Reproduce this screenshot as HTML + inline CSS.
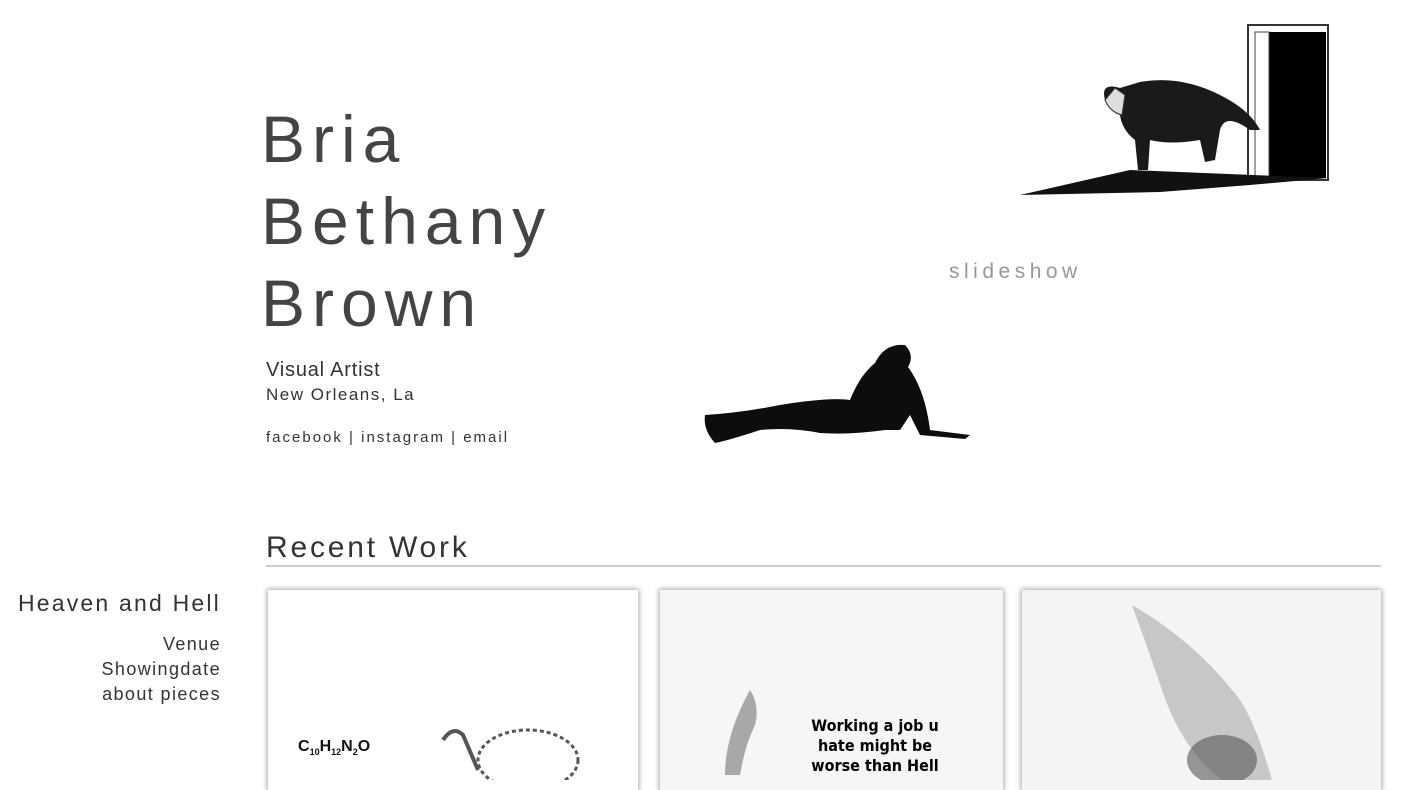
<!DOCTYPE html>
<html><head><meta charset="utf-8"><style>
body{margin:0;background:#fff;width:1414px;height:775px;overflow:hidden;position:relative;font-family:"Liberation Sans",sans-serif;color:#333}
.a{position:absolute}
.t{font-size:66px;letter-spacing:7px;color:#444;line-height:82px;font-weight:normal}
.card{position:absolute;top:590px;height:200px;background:#fff;box-shadow:0 0 5px 1px rgba(0,0,0,.35)}
</style></head><body>
<div class="a t" style="left:261px;top:98px">Bria<br>Bethany<br>Brown</div>
<div class="a" style="left:266px;top:359px;font-size:20px;color:#333;letter-spacing:0.8px">Visual Artist</div>
<div class="a" style="left:266px;top:385px;font-size:17px;color:#333;letter-spacing:1.5px">New Orleans, La</div>
<div class="a" style="left:266px;top:429px;font-size:15px;color:#333;letter-spacing:2px">facebook | instagram | email</div>
<div class="a" style="left:949px;top:260px;font-size:21px;color:#999;letter-spacing:4.5px">slideshow</div>

<svg class="a" style="left:1010px;top:20px" width="330" height="185">
<rect x="238" y="5" width="80" height="155" fill="#fff" stroke="#333" stroke-width="2"/>
<rect x="258" y="12" width="58" height="146" fill="#000"/>
<rect x="245" y="12" width="14" height="146" fill="#fff" stroke="#444"/>
<polygon points="10,175 120,150 318,158 240,165 150,172" fill="#111"/>
<path d="M95,80 Q90,62 110,68 L130,62 Q170,55 210,75 Q240,90 250,110 L240,110 Q215,92 210,110 L205,140 L195,142 L190,120 Q160,125 140,120 L138,150 L128,150 L125,120 Q112,110 110,95 Q100,92 95,80Z" fill="#1a1a1a"/>
<path d="M95,80 Q100,92 112,95 L115,75 L105,68Z" fill="#ddd" stroke="#333"/>
</svg>

<svg class="a" style="left:700px;top:335px" width="275" height="115">
<path d="M5,80 Q40,78 80,70 Q130,62 150,65 Q160,40 175,28 Q185,8 205,10 Q215,20 208,32 Q225,55 230,95 L270,100 L265,104 L220,100 L210,80 L200,95 L185,95 Q150,100 120,98 Q90,92 60,95 Q30,105 15,108 Q3,95 5,80Z" fill="#0d0d0d"/>
</svg>

<div class="a" style="left:266px;top:531px;font-size:30px;color:#333;letter-spacing:2.8px">Recent Work</div>
<div class="a" style="left:266px;top:565px;width:1115px;height:2px;background:#ccc"></div>

<div class="a" style="left:0;top:590px;width:221px;text-align:right;font-size:23px;color:#333;letter-spacing:2.2px">Heaven and Hell</div>
<div class="a" style="left:0;top:632px;width:221px;text-align:right;font-size:18px;line-height:25px;color:#333;letter-spacing:1.4px">Venue<br>Showingdate<br>about pieces</div>

<div class="card" style="left:268px;width:370px">
<div class="a" style="left:30px;top:148px;font-weight:bold;font-size:16px;color:#111">C<sub style="font-size:9px">10</sub>H<sub style="font-size:9px">12</sub>N<sub style="font-size:9px">2</sub>O</div>
<svg class="a" style="left:165px;top:130px" width="160" height="60"><ellipse cx="95" cy="40" rx="50" ry="30" fill="none" stroke="#555" stroke-width="3" stroke-dasharray="4 3"/><path d="M10,20 Q20,5 30,15 L45,50" stroke="#555" stroke-width="4" fill="none"/></svg>
</div>
<div class="card" style="left:660px;width:343px;background:#f6f6f8">
<div class="a" style="left:140px;top:126px;width:150px;text-align:center;font-weight:bold;font-size:16px;line-height:20px;color:#000;font-family:'DejaVu Sans Condensed','Liberation Sans',sans-serif">Working a job u hate might be worse than Hell</div>
<svg class="a" style="left:55px;top:95px" width="70" height="90"><path d="M35,5 Q45,20 40,40 Q30,60 25,90 L10,90 Q10,50 35,5Z" fill="#888" opacity=".7"/></svg>
</div>
<div class="card" style="left:1022px;width:359px;background:#f4f4f4">
<svg class="a" style="left:80px;top:10px" width="200" height="180"><path d="M30,5 Q50,60 60,90 Q80,150 120,180 L170,180 Q150,110 130,90 Q90,40 30,5Z" fill="#999" opacity=".5"/><ellipse cx="120" cy="160" rx="35" ry="25" fill="#555" opacity=".6"/></svg>
</div>
</body></html>
